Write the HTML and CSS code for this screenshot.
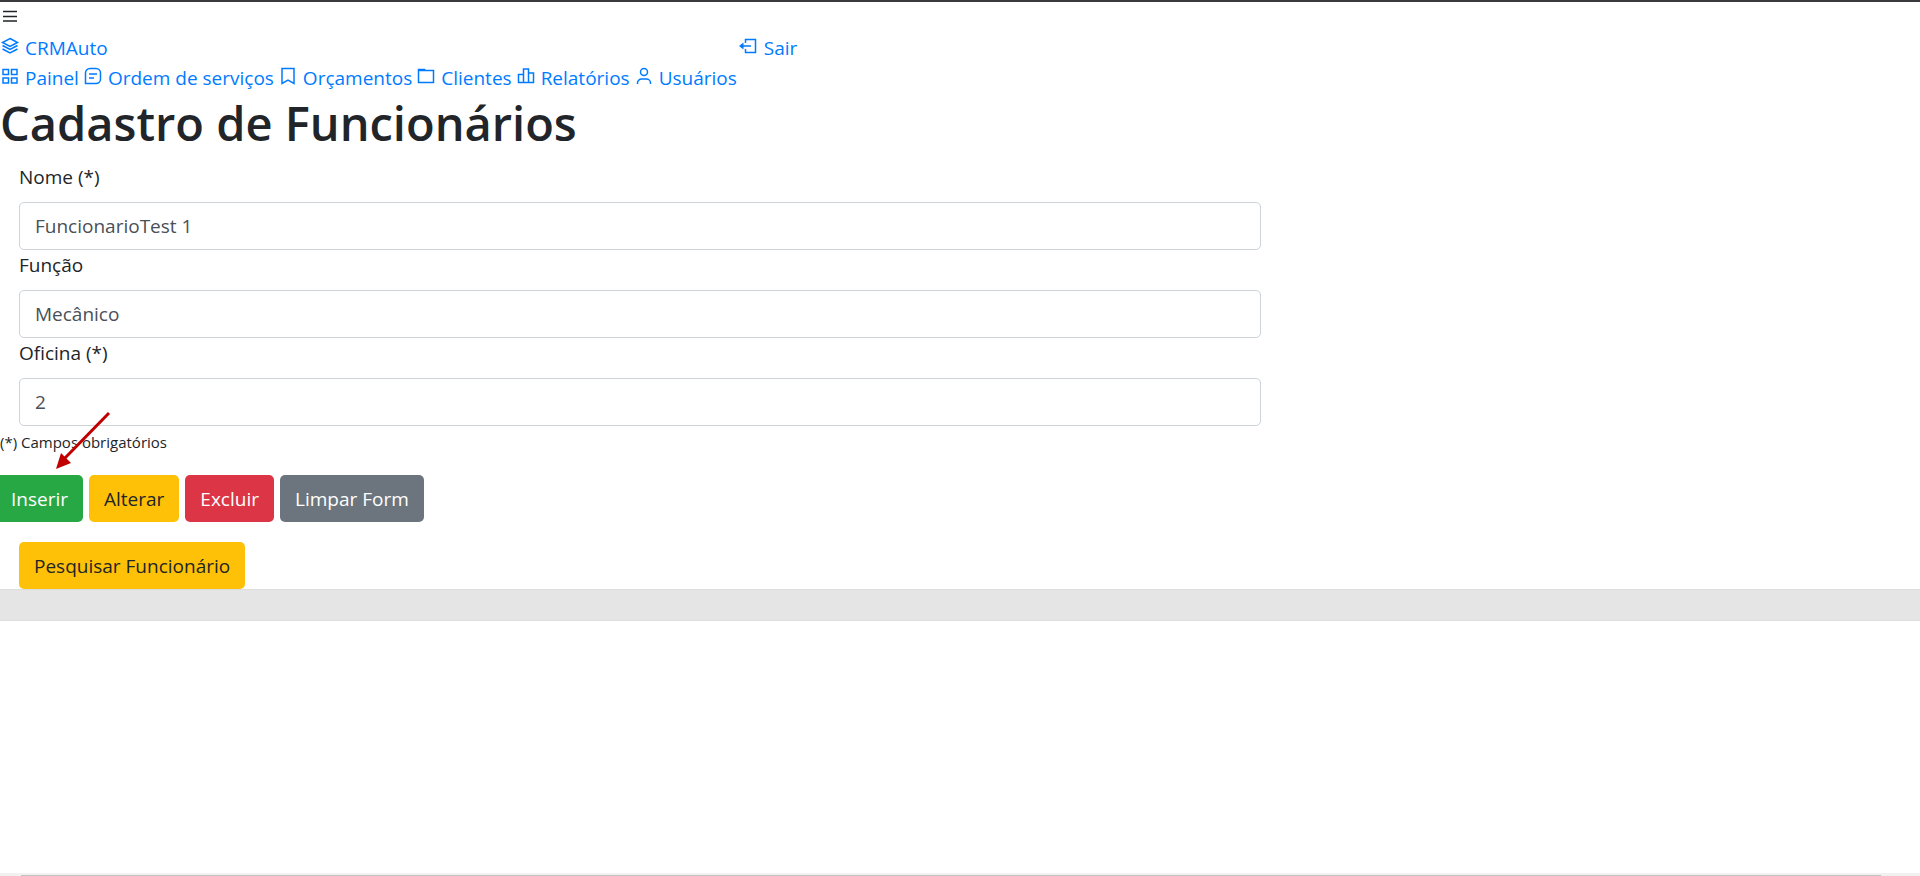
FILE: index.html
```html
<!DOCTYPE html>
<html lang="pt-BR">
<head>
<meta charset="utf-8">
<title>Cadastro de Funcionários</title>
<link rel="stylesheet" href="styles.css">
</head>
<body>
<div class="page">
  <header class="header">
    <button class="toggle" type="button" aria-label="Menu">
      <svg class="icon" viewBox="0 0 20 20"><path d="M3 4.500h14M3 9.500h14M3 14h14"/></svg>
    </button>
  </header>
  <nav class="nav">
    <div class="nav-main">
      <a class="link" href="#"><svg class="icon" viewBox="0 0 20 20"><path d="M10 2.500l7.500 4-7.500 4-7.500-4zM2.500 9.500l7.500 4 7.500-4M2.500 13l7.500 4 7.500-4"/></svg><span>CRMAuto</span></a>
      <div class="nav-list">
        <a class="link" href="#"><svg class="icon" viewBox="0 0 20 20"><path d="M3 3.500h5.500v5H3zM11.500 3.500H17v5h-5.500zM3 12h5.500v5H3zM11.500 12H17v5h-5.500z"/></svg><span>Painel</span></a>
        <a class="link" href="#"><svg class="icon" viewBox="0 0 20 20"><path d="M7 2.500h6a4.500 4.500 0 0 1 4.500 4.500v6a4.500 4.500 0 0 1-4.500 4.500H2.500V7A4.500 4.500 0 0 1 7 2.500zM6 8h8M6 12h5"/></svg><span>Ordem de serviços</span></a>
        <a class="link" href="#"><svg class="icon" viewBox="0 0 20 20"><path d="M4 2.500h12v15l-6-3.500-6 3.500z"/></svg><span>Orçamentos</span></a>
        <a class="link" href="#"><svg class="icon" viewBox="0 0 20 20"><path d="M2.500 3.500h6l1 1h8v12h-15zM2.500 4.500h7"/></svg><span>Clientes</span></a>
        <a class="link" href="#"><svg class="icon" viewBox="0 0 20 20"><path d="M2.500 8.500h5v8h-5zM7.500 3h5v13.500h-5zM12.500 7h5v9.500h-5z"/></svg><span>Relatórios</span></a>
        <a class="link" href="#"><svg class="icon" viewBox="0 0 20 20"><circle cx="10" cy="6" r="3.500"/><path d="M3.500 18v-1a4 4 0 0 1 4-4h5a4 4 0 0 1 4 4v1"/></svg><span>Usuários</span></a>
      </div>
    </div>
    <a class="link" href="#"><svg class="icon" viewBox="0 0 20 20"><path d="M6.500 7V3.500h10v13h-10V13M12 10H3"/><path class="solid" d="M0 10l4.500-3.500v7z"/></svg><span>Sair</span></a>
  </nav>
  <main>
    <h1 class="title">Cadastro de Funcionários</h1>
    <form class="form">
      <div class="fields">
        <label class="label" for="nome">Nome (*)</label>
        <input class="input" id="nome" type="text" value="FuncionarioTest 1">
        <label class="label" for="funcao">Função</label>
        <input class="input" id="funcao" type="text" value="Mecânico">
        <label class="label" for="oficina">Oficina (*)</label>
        <input class="input" id="oficina" type="text" value="2">
      </div>
      <small class="note">(*) Campos obrigatórios</small>
      <div class="actions">
        <button class="btn green" type="button">Inserir</button>
        <button class="btn yellow" type="button">Alterar</button>
        <button class="btn red" type="button">Excluir</button>
        <button class="btn gray" type="button">Limpar Form</button>
        <svg class="arrow" viewBox="0 0 56 60" aria-hidden="true"><path class="shaft" d="M54 2L10 47"/><path class="head" d="M1 58l5-16 10 10z"/></svg>
      </div>
      <div class="search"><button class="btn yellow" type="button">Pesquisar Funcionário</button></div>
    </form>
    <div class="band"></div>
  </main>
  <div class="scroll"><div class="thumb"></div></div>
</div>
</body>
</html>
```
FILE: styles.css
```css
* { box-sizing: border-box; }
body {
  margin: 0;
  background: #fff;
  color: #212529;
  font: 19px/30px "Open Sans", "Noto Sans", sans-serif;
}
.page {
  display: flex;
  flex-direction: column;
  min-height: 100vh;
  border-top: 2px solid #3a3a3c;
}
main { flex: 1; }
.icon {
  width: 20px;
  height: 20px;
  flex: none;
  fill: none;
  stroke: currentColor;
  stroke-width: 1.5;
}
.icon .solid { fill: currentColor; stroke: none; }
.header { height: 31px; padding-top: 5px; }
.toggle {
  display: block;
  padding: 0;
  border: 0;
  background: none;
  color: #212529;
}
.toggle .icon { display: block; }
.nav { display: flex; gap: 2px; }
.nav-list { display: flex; gap: 4px; }
.link {
  display: flex;
  gap: 5px;
  height: 30px;
  color: #007bff;
  text-decoration: none;
  white-space: nowrap;
}
.link .icon { margin-top: 3px; }
.title {
  margin: 0 0 9px;
  font-size: 47px;
  line-height: 60px;
  font-weight: 600;
}
.fields {
  display: flex;
  flex-direction: column;
  width: 66.6667%;
  padding: 0 19px;
}
.label { margin-bottom: 10px; }
.input {
  height: 48px;
  padding: 0 15px;
  border: 1px solid #ced4da;
  border-radius: 5px;
  background: #fff;
  color: #495057;
  font: inherit;
}
.note {
  display: block;
  font-size: 15px;
  line-height: 32px;
}
.actions {
  position: relative;
  display: flex;
  gap: 6px;
  margin: 17px 0 20px -4px;
}
.btn {
  height: 47px;
  padding: 0 15px;
  border: 0;
  border-radius: 5px;
  font: inherit;
}
.green { background: #28a745; color: #fff; }
.yellow { background: #ffc107; color: #212529; }
.red { background: #dc3545; color: #fff; }
.gray { background: #6c757d; color: #fff; }
.arrow {
  position: absolute;
  left: 59px;
  top: -64px;
  width: 56px;
  height: 60px;
}
.shaft { stroke: #c00000; stroke-width: 3; }
.head { fill: #c00000; }
.search { display: flex; padding-left: 19px; }
.band {
  height: 32px;
  border: 1px solid #dedede;
  border-width: 1px 0;
  background: #e5e5e5;
}
.scroll {
  height: 3px;
  padding: 2px 39px 0 21px;
  background: #f1f1f1;
}
.thumb { height: 1px; background: #c1c1c1; }
```
